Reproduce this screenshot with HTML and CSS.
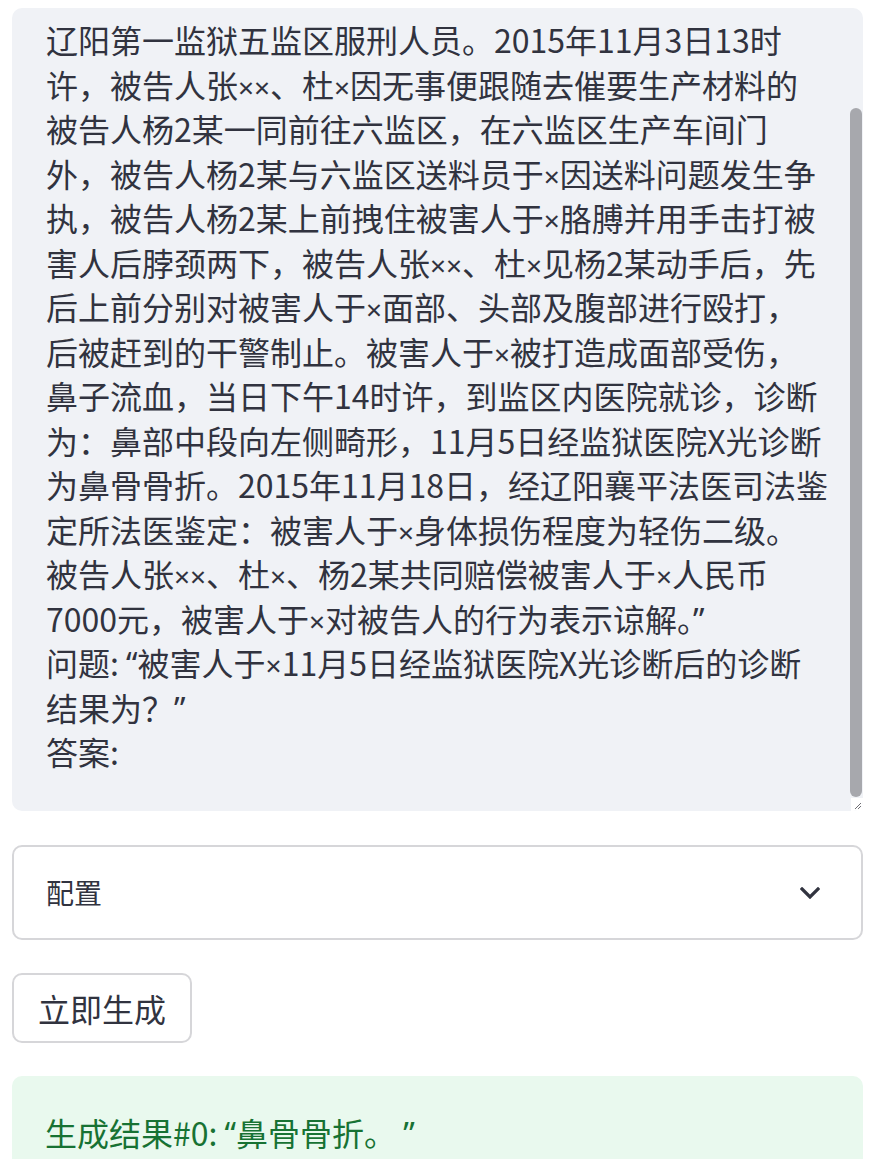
FILE: index.html
```html
<!DOCTYPE html>
<html lang="zh-CN">
<head>
<meta charset="utf-8">
<title>生成</title>
<link rel="stylesheet" href="styles.css">
</head>
<body>
<main class="page">
<div class="prompt-box">
<div class="prompt" role="textbox" aria-multiline="true">辽阳第一监狱五监区服刑人员。2015年11月3日13时
许，被告人张<span class="x">××</span>、杜<span class="x">×</span>因无事便跟随去催要生产材料的
被告人杨2某一同前往六监区，在六监区生产车间门
外，被告人杨2某与六监区送料员于<span class="x">×</span>因送料问题发生争
执，被告人杨2某上前拽住被害人于<span class="x">×</span>胳膊并用手击打被
害人后脖颈两下，被告人张<span class="x">××</span>、杜<span class="x">×</span>见杨2某动手后，先
后上前分别对被害人于<span class="x">×</span>面部、头部及腹部进行殴打，
后被赶到的干警制止。被害人于<span class="x">×</span>被打造成面部受伤，
鼻子流血，当日下午14时许，到监区内医院就诊，诊断
为：鼻部中段向左侧畸形，11月5日经监狱医院X光诊断
为鼻骨骨折。2015年11月18日，经辽阳襄平法医司法鉴
定所法医鉴定：被害人于<span class="x">×</span>身体损伤程度为轻伤二级。
被告人张<span class="x">××</span>、杜<span class="x">×</span>、杨2某共同赔偿被害人于<span class="x">×</span>人民币
7000元，被害人于<span class="x">×</span>对被告人的行为表示谅解。<span class="q">”</span>
问题: <span class="q">“</span>被害人于<span class="x">×</span>11月5日经监狱医院X光诊断后的诊断
结果为？<span class="q">”</span>
答案:</div>
<div class="scroll-thumb" aria-hidden="true"></div>
<svg class="resizer" width="12" height="13" viewBox="0 0 12 13" aria-hidden="true">
  <rect x="0" y="0" width="12" height="13" fill="#ffffff"/>
  <path d="M4 11 L10 5 M7 11 L10 8" stroke="#6f6f74" stroke-width="1" fill="none"/>
</svg>
</div>

<div class="expander">
  <span class="expander-label">配置</span>
  <svg class="chevron" width="20" height="12" viewBox="0 0 20 12" aria-hidden="true">
    <path d="M2 2 L10 10 L18 2" fill="none" stroke="#31333f" stroke-width="3.2" stroke-linecap="square" stroke-linejoin="miter"/>
  </svg>
</div>

<div class="actions">
  <button class="btn" type="button">立即生成</button>
</div>

<div class="result">生成结果#0: <span class="q">“</span>鼻骨骨折。 <span class="q">”</span></div>
</main>
</body>
</html>
```

FILE: styles.css
```css
html, body {
  margin: 0;
  padding: 0;
  background: #ffffff;
}

body {
  font-family: "Noto Sans CJK SC", "Noto Sans", sans-serif;
  color: #31333f;
}

.page {
  display: flex;
  flex-direction: column;
  gap: 33px;
  padding: 8px 18px 0 12px;
}

.prompt-box {
  position: relative;
  box-sizing: border-box;
  height: 803px;
  border-radius: 10px;
  background: #f0f2f6;
  overflow: hidden;
}

.prompt {
  box-sizing: border-box;
  padding: 9px 30px 0 34px;
  color: #31333f;
  font-family: "Noto Sans CJK SC", sans-serif;
  font-size: 32px;
  line-height: 44.5px;
  white-space: pre;
}

.x {
  font-family: "Noto Sans", sans-serif;
  font-size: 28px;
  line-height: 0;
}

.q {
  font-family: "Noto Sans", sans-serif;
  line-height: 0;
}

.scroll-thumb {
  position: absolute;
  top: 100px;
  right: 1px;
  width: 12px;
  height: 689px;
  border-radius: 6px;
  background: #a7a8ad;
}

.resizer {
  position: absolute;
  right: 0;
  bottom: 0;
  display: block;
}

.expander {
  box-sizing: border-box;
  height: 95px;
  margin-top: 1px;
  display: flex;
  align-items: center;
  justify-content: space-between;
  padding: 0 41px 0 32px;
  border: 2px solid #d6d6d9;
  border-radius: 10px;
  background: #ffffff;
}

.expander-label {
  font-size: 28px;
  line-height: 40px;
  color: #31333f;
  margin-top: -2px;
}

.chevron {
  display: block;
}

.actions {
  display: flex;
}

.btn {
  box-sizing: border-box;
  width: 180px;
  height: 70px;
  padding: 0;
  border: 2px solid #d6d6d9;
  border-radius: 10px;
  background: #ffffff;
  color: #31333f;
  font-family: "Noto Sans CJK SC", sans-serif;
  font-size: 32px;
  line-height: 40px;
}

.result {
  box-sizing: border-box;
  padding: 32px 33px 40px 33px;
  border-radius: 10px;
  background: #e9f9ee;
  color: #177233;
  font-size: 32px;
  line-height: 48px;
}
```
